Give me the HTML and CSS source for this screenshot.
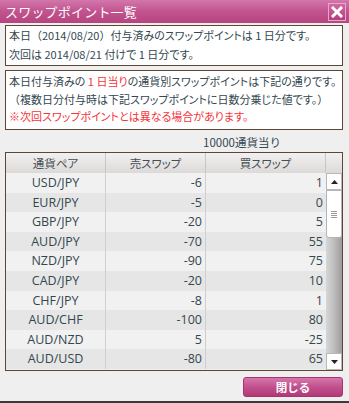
FILE: index.html
```html
<!DOCTYPE html>
<html lang="ja">
<head>
<meta charset="utf-8">
<link rel="stylesheet" href="styles.css">
</head>
<body>
<div class="win">
  <div class="titlebar">
    <span class="title">スワップポイント一覧</span>
    <span class="close">
      <svg width="12" height="12" viewBox="0 0 12 12"><path d="M2 2 L10 10 M10 2 L2 10" stroke="#fff" stroke-width="3" stroke-linecap="square"/></svg>
    </span>
  </div>
  <div class="content">
    <div class="box box1">
      <p>本日<span class="fw">（</span>2014/08/20<span class="fw">）</span>付与済みのスワップポイントは 1 日分です。</p>
      <p>次回は 2014/08/21 付けで 1 日分です。</p>
    </div>
    <div class="box box2">
      <p>本日付与済みの <span class="red">1 日当り</span>の通貨別スワップポイントは下記の通りです。</p>
      <p><span class="fw">（</span>複数日分付与時は下記スワップポイントに日数分乗じた値です。<span class="fw">）</span></p>
      <p class="red">※次回スワップポイントとは異なる場合があります。</p>
    </div>
    <div class="unit">10000通貨当り</div>
    <div class="table">
      <div class="thead">
        <div class="th">通貨ペア</div>
        <div class="th">売スワップ</div>
        <div class="th">買スワップ</div>
        <div class="th blank"></div>
      </div>
      <div class="tbody">
        <div class="rows">
          <div class="row"><div class="c pair">USD/JPY</div><div class="c num">-6</div><div class="c num">1</div></div>
          <div class="row"><div class="c pair">EUR/JPY</div><div class="c num">-5</div><div class="c num">0</div></div>
          <div class="row"><div class="c pair">GBP/JPY</div><div class="c num">-20</div><div class="c num">5</div></div>
          <div class="row"><div class="c pair">AUD/JPY</div><div class="c num">-70</div><div class="c num">55</div></div>
          <div class="row"><div class="c pair">NZD/JPY</div><div class="c num">-90</div><div class="c num">75</div></div>
          <div class="row"><div class="c pair">CAD/JPY</div><div class="c num">-20</div><div class="c num">10</div></div>
          <div class="row"><div class="c pair">CHF/JPY</div><div class="c num">-8</div><div class="c num">1</div></div>
          <div class="row"><div class="c pair">AUD/CHF</div><div class="c num">-100</div><div class="c num">80</div></div>
          <div class="row"><div class="c pair">AUD/NZD</div><div class="c num">5</div><div class="c num">-25</div></div>
          <div class="row"><div class="c pair">AUD/USD</div><div class="c num">-80</div><div class="c num">65</div></div>
        </div>
        <div class="scrollbar">
          <div class="sbtn up"><svg width="7" height="4" viewBox="0 0 7 4"><path d="M0 4 L3.5 0 L7 4 Z" fill="#222"/></svg></div>
          <div class="thumb"><span class="grip"></span></div>
          <div class="track"></div>
          <div class="sbtn down"><svg width="7" height="4" viewBox="0 0 7 4"><path d="M0 0 L3.5 4 L7 0 Z" fill="#222"/></svg></div>
        </div>
      </div>
    </div>
    <div class="actions">
      <button class="btn">閉じる</button>
    </div>
  </div>
  <div class="bottom"></div>
</div>
</body>
</html>
```
FILE: styles.css
```css
* { box-sizing: border-box; }
html, body { margin: 0; padding: 0; }
body {
  width: 349px;
  height: 403px;
  overflow: hidden;
  background: #efefef;
  font-family: "Noto Sans CJK JP", "Noto Sans", sans-serif;
  color: #34474f;
}
.win { width: 349px; height: 403px; display: flex; flex-direction: column; }
.titlebar {
  height: 23px;
  background: linear-gradient(#d277ab, #c2538f 50%, #b6457f);
  display: flex;
  align-items: center;
  justify-content: space-between;
  padding: 0 3px 0 5px;
}
.title {
  color: #fff;
  font-size: 13px;
  line-height: 23px;
  letter-spacing: 0.2px;
}
.close {
  width: 18px;
  height: 18px;
  border: 1px solid #e8a8cb;
  background: linear-gradient(#d06aa2, #b43e7c);
  display: flex;
  align-items: center;
  justify-content: center;
  margin-top: 1px;
}
.content { padding: 2px 6px 0 5px; flex: 1; display: flex; flex-direction: column; }
.box {
  background: #fff;
  border: 1px solid #5e4634;
  padding: 0 3px;
  font-size: 11px;
  font-feature-settings: "palt";
}
.box .fw { font-feature-settings: normal; }
.box p { margin: 0; white-space: nowrap; }
.box1 { height: 41px; padding-top: 0; }
.box1 p { line-height: 19px; }
.box2 { height: 60px; margin-top: 4px; padding-top: 2px; }
.box2 p { line-height: 17.5px; }
.red { color: #f5333a; }
.unit {
  font-size: 11.5px;
  line-height: 12px;
  margin: 6px 0 4px 198px;
}
.table {
  width: 338px;
  border: 1px solid #5e4634;
}
.thead {
  display: grid;
  grid-template-columns: 100px 100px 120px 16px;
  height: 20px;
}
.th {
  background: linear-gradient(#f2f0f0, #ddd9d9);
  text-align: center;
  font-size: 11.5px;
  font-feature-settings: "palt";
  color: #464f54;
  line-height: 20px;
  border-right: 1px solid #c9c6c6;
  border-bottom: 1px solid #cfcccc;
}
.th.blank { border-right: none; }
.tbody { display: flex; height: 197px; overflow: hidden; }
.rows { width: 320px; }
.row {
  display: grid;
  grid-template-columns: 100px 100px 120px;
  height: 19.6px;
  background: #f1f1f1;
}
.row:nth-child(even) { background: #e6e6e6; }
.c {
  font-size: 12.5px;
  line-height: 19.6px;
  border-right: 1px solid #cfcfcf;
  font-family: "Open Sans", "Noto Sans", sans-serif;
}
.c:last-child { border-right: none; }
.pair { text-align: center; }
.num { text-align: right; padding-right: 3px; }
.scrollbar {
  width: 16px;
  display: flex;
  flex-direction: column;
  background: linear-gradient(to right, #d6d6d6, #bdbdbd 50%, #9c9c9c);
}
.sbtn {
  height: 17px;
  background: #fdfdfd;
  border: 1px solid #b8b8b8;
  display: flex;
  align-items: center;
  justify-content: center;
}
.thumb {
  height: 48px;
  background: #fff;
  border: 1px solid #b4b4b4;
  border-radius: 0 0 3px 3px;
  display: flex;
  align-items: center;
  justify-content: center;
}
.grip {
  width: 6px;
  height: 7px;
  background: repeating-linear-gradient(#9a9a9a 0 1px, transparent 1px 2px);
}
.track { flex: 1; }
.actions { display: flex; justify-content: flex-end; padding-top: 6px; }
.btn {
  width: 100px;
  height: 20px;
  border: 1px solid #a8336f;
  border-radius: 3px;
  background: linear-gradient(#d677ab, #c2508e 50%, #b03a78);
  color: #fff;
  font-family: "Noto Sans CJK JP", sans-serif;
  font-weight: bold;
  font-size: 11.5px;
  line-height: 16px;
  padding: 0;
}
.bottom {
  height: 2px;
  background: #3a3a3a;
  margin-top: auto;
}
```
